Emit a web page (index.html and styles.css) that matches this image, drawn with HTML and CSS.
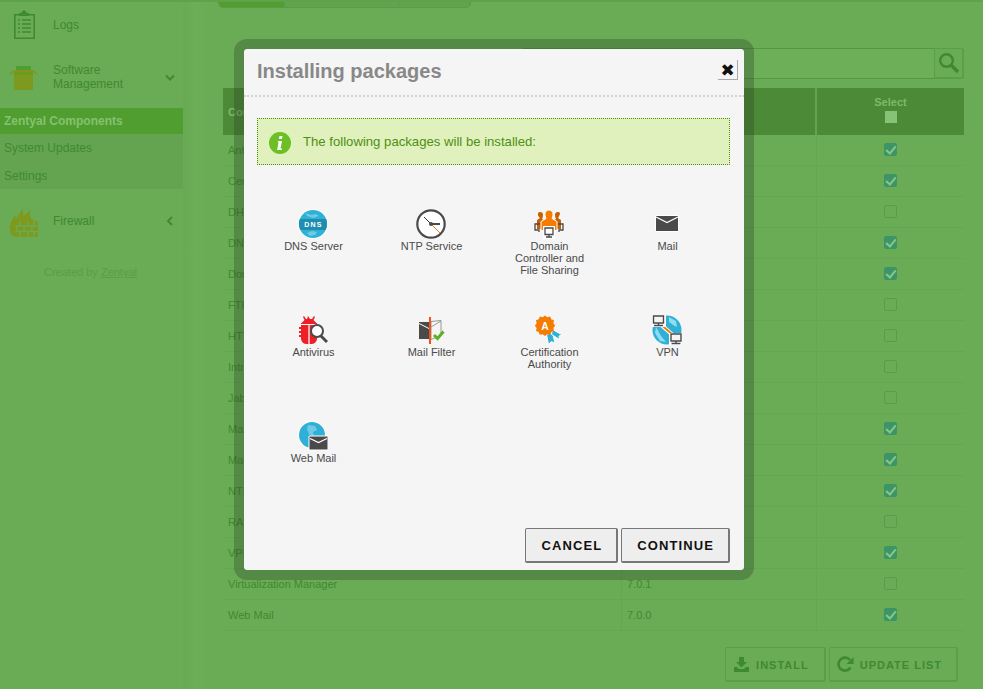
FILE: index.html
```html
<!DOCTYPE html>
<html lang="en">
<head>
<meta charset="utf-8">
<title>Zentyal Components</title>
<link rel="stylesheet" href="styles.css">
</head>
<body>
<div class="page">
  <aside class="sidebar">
    <div class="nav-item nav-logs">
      <svg class="nav-icon" width="30" height="30" viewBox="0 0 30 30"><path fill="#3f8a30" d="M10 3h2.500a2.500 2.500 0 0 1 5 0H20v3h-10z"/><path fill="none" stroke="#3f8a30" stroke-width="1.600" d="M10 4.800H5.800v23.500h19.400V4.800H20"/><path stroke="#3f8a30" stroke-width="1.300" d="M9 10h2M13 10h9M9 14h2M13 14h9M9 18h2M13 18h9M9 22h2M13 22h9"/></svg>
      <span class="nav-label">Logs</span>
    </div>
    <div class="nav-item nav-software">
      <svg class="nav-icon" width="30" height="30" viewBox="0 0 30 30"><path fill="#4f9e2f" d="M7 3h15v5H7z"/><path fill="#7d9a1f" d="M5 8h19v19H5z"/><path fill="#6f9a22" d="M5 8h19v4H5z"/><path fill="#7d9a1f" d="M0 11l5-4h19l5 4-1 1-4-3H5l-4 3z"/></svg>
      <span class="nav-label">Software<br>Management</span>
      <svg class="nav-caret" width="10" height="8" viewBox="0 0 10 8"><path fill="none" stroke="#3f8a30" stroke-width="2" d="M1 1.500l4 4 4-4"/></svg>
    </div>
    <ul class="subnav">
      <li class="subnav-active">Zentyal Components</li>
      <li>System Updates</li>
      <li>Settings</li>
    </ul>
    <div class="nav-item nav-firewall">
      <svg class="nav-icon" width="30" height="30" viewBox="0 0 30 30"><path fill="#7d9a1f" d="M1 22C0 16 4 12 6 8l1 4c2-4 5-6 6-11 1 3 2 5 1 8 3-2 6-4 7-7 1 4-1 7 1 9l3 3H7l-1 16c-3-1-5-4-5-8z"/><path fill="#7d9a1f" d="M6 14h23v16H6z"/><path stroke="#6aab55" stroke-width="1.300" d="M6 19h23M6 24.500h23M11 14v5M19 14v5M25 14v5M8 19v5.500M15 19v5.500M23 19v5.500M11 24.500V30M19 24.500V30M25 24.500V30"/></svg>
      <span class="nav-label">Firewall</span>
      <svg class="nav-caret" width="8" height="10" viewBox="0 0 8 10"><path fill="none" stroke="#3f8a30" stroke-width="2" d="M6 1L2 5l4 4"/></svg>
    </div>
    <p class="credit">Created by <a href="#">Zentyal</a></p>
  </aside>

  <main class="main">
    <div class="tabs"><span class="tab tab-active"></span><span class="tab tab-wide"></span><span class="tab"></span></div>
    <div class="search">
      <div class="search-input"></div>
      <div class="search-button">
        <svg width="22" height="22" viewBox="0 0 22 22"><circle cx="8.500" cy="8.500" r="6.300" fill="none" stroke="#3f8a30" stroke-width="2.400"/><path stroke="#3f8a30" stroke-width="3.400" d="M13 13l7 7"/></svg>
      </div>
    </div>
    <table class="packages">
      <thead>
        <tr><th class="col-name">Component</th><th class="col-version"></th><th class="col-select">Select<span class="head-box"></span></th></tr>
      </thead>
      <tbody>
        <tr><td>Antivirus</td><td></td><td><span class="box on"></span></td></tr>
        <tr><td>Certification Authority</td><td></td><td><span class="box on"></span></td></tr>
        <tr><td>DHCP Server</td><td></td><td><span class="box"></span></td></tr>
        <tr><td>DNS Server</td><td></td><td><span class="box on"></span></td></tr>
        <tr><td>Domain Controller</td><td></td><td><span class="box on"></span></td></tr>
        <tr><td>FTP</td><td></td><td><span class="box"></span></td></tr>
        <tr><td>HTTP Proxy</td><td></td><td><span class="box"></span></td></tr>
        <tr><td>Intrusion Prevention</td><td></td><td><span class="box"></span></td></tr>
        <tr><td>Jabber</td><td></td><td><span class="box"></span></td></tr>
        <tr><td>Mail</td><td></td><td><span class="box on"></span></td></tr>
        <tr><td>Mail Filter</td><td></td><td><span class="box on"></span></td></tr>
        <tr><td>NTP Service</td><td></td><td><span class="box on"></span></td></tr>
        <tr><td>RADIUS</td><td></td><td><span class="box"></span></td></tr>
        <tr><td>VPN</td><td></td><td><span class="box on"></span></td></tr>
        <tr><td>Virtualization Manager</td><td>7.0.1</td><td><span class="box"></span></td></tr>
        <tr><td>Web Mail</td><td>7.0.0</td><td><span class="box on"></span></td></tr>
      </tbody>
    </table>
    <div class="actions">
      <button class="action">
        <svg width="15" height="15" viewBox="0 0 15 15"><path fill="#3f8a30" d="M5 0h5v5h3L7.500 10.500 2 5h3zM0 10h3l2 2h5l2-2h3v5H0z"/></svg>
        <span>INSTALL</span>
      </button>
      <button class="action action-update">
        <svg width="17" height="17" viewBox="0 0 17 17"><path fill="none" stroke="#3f8a30" stroke-width="2.600" d="M13.500 11.500A6.500 6.500 0 1 1 13 4"/><path fill="#3f8a30" d="M16.500 1v7h-7z"/></svg>
        <span>UPDATE LIST</span>
      </button>
    </div>
  </main>
</div>

<section class="dialog" role="dialog">
  <header class="dialog-head">
    <h2 class="dialog-title">Installing packages</h2>
    <button class="close">✖</button>
  </header>
  <div class="notice">
    <svg class="notice-icon" width="22" height="22" viewBox="0 0 22 22"><circle cx="11" cy="11" r="11" fill="#6cbf25"/><path fill="#fff" d="M10.500 4h3l-.5 3h-3zM9 9h4l-1.500 7.500H13l-.3 1.500H8l.4-1.500 1.200-6.300H8.700z"/></svg>
    <span>The following packages will be installed:</span>
  </div>
  <div class="modules">
    <div class="module">
      <svg width="30" height="30" viewBox="0 0 30 30"><circle cx="15" cy="15" r="15" fill="#fff"/><circle cx="15" cy="15" r="14" fill="#2fb0d6"/><path fill="#6fcbe4" d="M8 4l5 2 5-1 3 2-6 2-6-2zM9 24l5-2 5 1-2 3-5 1z"/><path fill="#1f8eae" d="M1.900 10H28.100A14 14 0 0 1 27.650 21H2.350A14 14 0 0 1 1.900 10z"/><text x="15.500" y="18" text-anchor="middle" class="dns-text">DNS</text></svg>
      <span>DNS Server</span>
    </div>
    <div class="module">
      <svg width="30" height="30" viewBox="0 0 30 30"><circle cx="15" cy="15" r="13.700" fill="#fff" stroke="#4a4a4a" stroke-width="2.200"/><path stroke="#333" stroke-width="1" d="M15 15L8 8"/><path stroke="#e87a10" stroke-width="1" d="M15 15l9 9"/><path stroke="#4a4a4a" stroke-width="2" d="M15 15h9"/><circle cx="15" cy="15" r="2" fill="#4a4a4a"/></svg>
      <span>NTP Service</span>
    </div>
    <div class="module">
      <svg width="30" height="30" viewBox="0 0 30 30"><path fill="#c85f00" d="M6 3a3 3 0 0 1 3 3c0 2-1 4-1 4l3 2v8H3v-9l3-2C5 8 4 7 4 6a2.500 2.500 0 0 1 2-3zM24 3a3 3 0 0 0-3 3c0 2 1 4 1 4l-3 2v8h8v-9l-3-2c1-2 2-3 2-5a2.500 2.500 0 0 0-2-1z"/><path fill="#f57c00" stroke="#fff" d="M15 1a4 4 0 0 1 4 4.500c0 2-1 4-1 4l5 3v9H7v-9l5-3s-1-2-1-4A4 4 0 0 1 15 1z"/><path fill="none" stroke="#4a4a4a" stroke-width="1.300" d="M6 15H1v6h4v2M24 15h5v6h-4v2"/><path fill="#fff" d="M9 17h12v13H9z"/><path fill="#fff" stroke="#4a4a4a" stroke-width="1.300" d="M11 19h8v6.500h-8z"/><path stroke="#4a4a4a" stroke-width="1.300" d="M15 25.500V28M12 28h6"/></svg>
      <span>Domain<br>Controller and<br>File Sharing</span>
    </div>
    <div class="module">
      <svg width="30" height="30" viewBox="0 0 30 30"><path fill="#4a4a4a" stroke="#fff" d="M3.500 6.500h23v16h-23z"/><path fill="none" stroke="#fff" stroke-width="1.200" d="M4 8l11 5.500L26 8"/></svg>
      <span>Mail</span>
    </div>
    <div class="module">
      <svg width="30" height="30" viewBox="0 0 30 30"><path fill="#ee2027" d="M10 1l2 3h2l2-3 1 1-1.500 3 2.500 2.500V11H4V7.500L6.500 5 5 2l1-1 2 3h1zM1 12h2v2H1zM1 16h2v2H1zM1 20h2v2H1z"/><path fill="#ee2027" d="M3 8h16v16a6 6 0 0 1-6 5H9a6 6 0 0 1-6-5z"/><path stroke="#fff" stroke-width="1.200" d="M3 9.500h16M11 9.500V29"/><path stroke="#4a4a4a" stroke-width="3" d="M22 20l7 7"/><circle cx="19" cy="16" r="6" fill="#fff" stroke="#4a4a4a" stroke-width="2"/></svg>
      <span>Antivirus</span>
    </div>
    <div class="module">
      <svg width="30" height="30" viewBox="1 0 30 30"><path fill="#4a4a4a" d="M4 7h10v17H4z"/><path fill="none" stroke="#fff" stroke-width="1" d="M4 8.500l10 5"/><path fill="#f5f5f5" stroke="#999" d="M16 6.500l10-1v15l-10 4z"/><path fill="none" stroke="#999" d="M16 12l10-6"/><path stroke="#f0521e" stroke-width="2" d="M15 2v27"/><path fill="none" stroke="#5cb125" stroke-width="3" d="M19 20l3.500 3.500 6-7"/></svg>
      <span>Mail Filter</span>
    </div>
    <div class="module">
      <svg width="30" height="30" viewBox="0 0 30 30"><path fill="#2fb0d6" stroke="#fff" stroke-width="1" d="M12.500 19.500l6-2 2.500 11-3.500-2-3 3z"/><path fill="#2fb0d6" stroke="#fff" stroke-width="1" d="M18.500 14.500l10 5.500-3.500 1 .5 3.500-8-5z"/><g transform="translate(-.5 .4) scale(1.150)"><path fill="#f57c00" d="M10 0l2 1.500 2.500-.5 1 2.300 2.300 1-.5 2.500L18.800 9 17.300 11l.5 2.500-2.300 1-1 2.300-2.500-.5L10 18l-2-1.700-2.500.5-1-2.300-2.300-1 .5-2.500L1.200 9l1.500-2.200-.5-2.500 2.300-1 1-2.300L8 1.500z"/><text x="10" y="12.500" text-anchor="middle" class="cert-text">A</text></g></svg>
      <span>Certification<br>Authority</span>
    </div>
    <div class="module">
      <svg width="30" height="30" viewBox="0 0 30 30"><circle cx="15" cy="15" r="14.500" fill="#2fb0d6"/><path fill="#8fdcf0" d="M4 12l5 9 5 6-6-1-5-8zM17 2l7 4 1 6-4-2-4-3z"/><path stroke="#fff" stroke-width="4" d="M6 7l18 16"/><path stroke="#f57c00" stroke-width="2" d="M9 9.500l13 11.500"/><path fill="#fff" d="M0 0h14v12H0z"/><path fill="#f5f5f5" stroke="#4a4a4a" stroke-width="1.400" d="M1.500 1h10v7h-10z"/><path stroke="#4a4a4a" stroke-width="1.400" d="M6.500 8v2M2 10.500h9"/><path fill="#fff" d="M17 18h13v12H17z"/><path fill="#f5f5f5" stroke="#4a4a4a" stroke-width="1.400" d="M19 19h10v7H19z"/><path stroke="#4a4a4a" stroke-width="1.400" d="M24 26v2M19.500 28.500h9"/></svg>
      <span>VPN</span>
    </div>
    <div class="module">
      <svg width="30" height="30" viewBox="0 0 30 30"><circle cx="14" cy="14" r="14" fill="#fff"/><circle cx="14" cy="14" r="13" fill="#2fb0d6"/><path fill="#6fcbe4" d="M10 4l7 1 2 4-4 2 1 5-5-3-2-5z"/><path fill="#4a4a4a" stroke="#fff" d="M11 15h19v14H11z"/><path fill="none" stroke="#fff" stroke-width="1.200" d="M12 17.500l8.500 4 8.500-4"/></svg>
      <span>Web Mail</span>
    </div>
  </div>
  <footer class="dialog-foot">
    <button class="dialog-btn dialog-btn-cancel">CANCEL</button>
    <button class="dialog-btn">CONTINUE</button>
  </footer>
</section>
</body>
</html>
```
FILE: styles.css
```css
* { box-sizing: border-box; }

html, body {
  margin: 0;
  height: 689px;
  overflow: hidden;
}

body {
  font-family: "Liberation Sans", Arial, sans-serif;
  font-size: 11px;
  background: #6aab55;
  color: #3f8a30;
}

.page {
  display: flex;
  height: 689px;
  border-top: 2px solid #5fa24b;
  background: linear-gradient(90deg, #68a953 0, #68a953 183px, #6cad57 196px, #6aab55 208px);
}

/* Sidebar */
.sidebar {
  width: 183px;
  flex: none;
  background: #6aab55;
}

.nav-item {
  display: flex;
  align-items: center;
  padding-left: 9px;
  color: #3f8a30;
  font-size: 12px;
  line-height: 14px;
}

.nav-icon { flex: none; margin-right: 14px; }
.nav-label { flex: 1; }
.nav-caret { flex: none; margin-right: 8px; }

.nav-logs { height: 45px; }
.nav-software { height: 61px; }
.nav-software .nav-label { margin-top: -2px; }
.nav-firewall { height: 47px; margin-top: 8px; }
.nav-firewall .nav-icon { margin-top: 2px; }
.nav-firewall .nav-caret { margin-right: 9px; }

.subnav {
  list-style: none;
  margin: 0;
  padding: 0;
  background: #64a450;
}

.subnav li {
  height: 27.500px;
  line-height: 28px;
  padding-left: 4px;
  font-size: 12px;
  color: #3f8a30;
}

.subnav .subnav-active {
  height: 26px;
  line-height: 26px;
  background: #4f9e2f;
  color: #86c171;
  font-weight: 700;
}

.credit {
  margin: 22px 0 0;
  padding-right: 2px;
  text-align: center;
  color: #57a043;
  font-size: 11px;
}

.credit a { color: #57a043; }

/* Main */
.main {
  flex: 1;
  padding: 0 19px 0 40px;
  min-width: 0;
}

.tabs {
  display: flex;
  height: 6px;
  margin-left: -5px;
  width: 253px;
  border-radius: 0 0 5px 5px;
  overflow: hidden;
  background: #62a44e;
  border: 1px solid #5b9c48;
  border-top: 0;
}

.tab { width: 71px; border-right: 1px solid #5b9c48; }
.tab-active { width: 66px; background: #4f9e2f; }
.tab-wide { width: 115px; }

.search {
  display: flex;
  height: 31px;
  margin-top: 40px;
  padding-left: 300px;
}

.search-input {
  flex: 1;
  border: 1px solid #4f9a3c;
  border-right: 0;
  background: #6dae58;
}

.search-button {
  width: 30px;
  display: flex;
  align-items: center;
  justify-content: center;
  border: 1px solid #58a044;
  border-right-width: 2px;
  border-bottom-width: 2px;
  border-radius: 0 2px 2px 0;
  background: #6aab55;
}

.packages {
  width: 741px;
  margin-top: 9px;
  border-collapse: separate;
  border-spacing: 0;
  table-layout: fixed;
}

.col-name { width: 399px; }
.col-version { width: 195px; }

.packages th {
  height: 47px;
  padding: 0 5px;
  background: #4d8a37;
  color: #7cba68;
  font-size: 11px;
  font-weight: 700;
  text-align: left;
}

.packages .col-version { border-right: 2px solid #62a44e; }

.packages .col-select {
  text-align: center;
  vertical-align: top;
  padding-top: 8px;
  line-height: 12px;
}

.head-box {
  display: block;
  width: 12px;
  height: 12px;
  margin: 3px auto 0;
  background: #88c276;
}

.packages td {
  height: 31px;
  padding: 0 5px;
  font-size: 11px;
  color: #3f8a30;
  border-bottom: 1px solid #65a650;
  border-right: 1px solid #65a650;
}

.packages td:last-child {
  text-align: center;
  border-right: 0;
}

.box {
  display: block;
  width: 13px;
  height: 13px;
  margin: -2px auto 0;
  border: 1px solid #5a9c47;
  border-radius: 2px;
}

.box.on {
  background: #3d9468;
  border-color: #3d9468;
  position: relative;
}

.box.on::after {
  content: "";
  position: absolute;
  left: 3px;
  top: 0;
  width: 4px;
  height: 8px;
  border: solid #86c884;
  border-width: 0 2px 2px 0;
  transform: rotate(40deg);
}

.actions {
  display: flex;
  justify-content: flex-end;
  gap: 3px;
  margin-top: 16px;
  padding-right: 6px;
}

.action {
  display: flex;
  align-items: center;
  gap: 7px;
  height: 35px;
  padding: 0 15px 0 8px;
  border: 1px solid #58a044;
  border-right-width: 2px;
  border-bottom-width: 2px;
  border-radius: 2px;
  background: #6aab55;
  color: #3f8a30;
  font: 700 11px "Liberation Sans", Arial, sans-serif;
  letter-spacing: 1px;
}

.action-update {
  gap: 6px;
  padding: 0 14px 0 7px;
}

.action span { margin-top: 2px; }

/* Dialog */
.dialog {
  position: absolute;
  left: 234px;
  top: 39px;
  width: 520px;
  height: 541px;
  display: flex;
  flex-direction: column;
  padding: 0 0 7px;
  border: 10px solid rgba(40, 60, 40, .31);
  border-radius: 13px;
  background: #f5f5f5;
  background-clip: padding-box;
  color: #4a4a4a;
}

.dialog-head {
  position: relative;
  height: 48px;
  padding: 10px 13px 0;
  border-bottom: 2px dotted #d4d4d4;
}

.dialog-title {
  margin: 0;
  font-size: 20px;
  line-height: 24px;
  font-weight: 700;
  color: #888;
}

.close {
  position: absolute;
  right: 6px;
  top: 11px;
  width: 20px;
  height: 20px;
  padding: 0;
  border: 0;
  border-right: 1px solid #aaa;
  border-bottom: 1px solid #aaa;
  background: #f5f5f5;
  font: 17px/18px "DejaVu Sans", sans-serif;
  color: #111;
}

.notice {
  display: flex;
  align-items: center;
  gap: 12px;
  height: 47px;
  margin: 21px 14px 0 13px;
  padding: 0 11px;
  border: 1px dotted #4f8f10;
  background: #e0f1bd;
  color: #4f9012;
  font-size: 13.150px;
}

.notice-icon { margin-top: 3px; flex: none; }

.modules {
  display: grid;
  grid-template-columns: repeat(4, 118px);
  grid-auto-rows: 106px;
  margin: 44px 0 0 10.500px;
}

.module {
  display: flex;
  flex-direction: column;
  align-items: center;
  text-align: center;
  font-size: 11px;
  line-height: 12px;
  color: #4a4a4a;
}

.module svg { margin: 0 1px 1px 0; flex: none; }

.dns-text {
  font: 700 7px "Liberation Sans", Arial, sans-serif;
  letter-spacing: 1.300px;
  fill: #fff;
}

.cert-text {
  font: 700 9px "Liberation Sans", Arial, sans-serif;
  fill: #fff;
}

.dialog-foot {
  display: flex;
  justify-content: flex-end;
  gap: 3px;
  margin-top: auto;
  padding-right: 14px;
}

.dialog-btn {
  height: 35px;
  padding: 0 14px 0 15px;
  border: 1px solid #777;
  border-right-width: 2px;
  border-bottom-width: 2px;
  border-radius: 2px;
  background: #eee;
  color: #111;
  font: 700 13px "Liberation Sans", Arial, sans-serif;
  letter-spacing: 1.100px;
}

.dialog-btn-cancel { padding-left: 16px; }
```
